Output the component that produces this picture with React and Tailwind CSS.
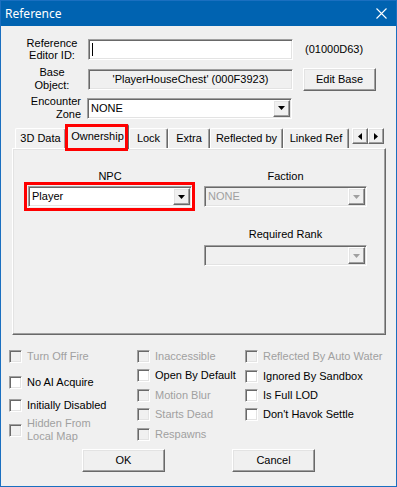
import React from 'react';

const sunken =
  'border border-t-[#a0a0a0] border-l-[#a0a0a0] border-b-white border-r-white shadow-[inset_1px_1px_0_#696969,inset_-1px_-1px_0_#e3e3e3]';
const raised =
  'border border-t-white border-l-white border-b-[#696969] border-r-[#696969] shadow-[inset_-1px_-1px_0_#a0a0a0,inset_1px_1px_0_#e3e3e3]';

const DownArrow = ({ disabled }) => (
  <svg width="7" height="4" viewBox="0 0 7 4">
    <path d="M0 0h7L3.5 4z" fill={disabled ? '#a0a0a0' : '#000'} />
  </svg>
);

const Combo = ({ value, disabled, className = '' }) => (
  <div className={`${sunken} h-[21px] flex p-[1px] ${disabled ? 'bg-[#f0f0f0]' : 'bg-white'} ${className}`}>
    <div className={`flex-1 flex items-center pl-[2px] ${disabled ? 'text-[#a0a0a0]' : 'text-black'}`}>{value}</div>
    <div className={`${raised} w-[17px] h-full bg-[#f0f0f0] flex items-center justify-center`}>
      <DownArrow disabled={disabled} />
    </div>
  </div>
);

const Check = ({ label, disabled, className = '' }) => (
  <div className={`flex items-center gap-[5px] ${className}`}>
    <div className={`${sunken} w-[13px] h-[13px] shrink-0 ${disabled ? 'bg-[#f0f0f0]' : 'bg-white'}`} />
    <div className={`leading-[13px] whitespace-pre ${disabled ? 'text-[#a0a0a0]' : 'text-black'}`}>{label}</div>
  </div>
);

const Tab = ({ label, width, selected }) => (
  <div
    className={`${width} flex items-center justify-center border-t border-l border-t-white border-l-white border-r border-r-[#696969] shadow-[inset_-1px_0_0_#a0a0a0] rounded-t-[2px] bg-[#f0f0f0] ${
      selected ? 'h-[25px] -mb-[1px] relative z-10 pb-[1px]' : 'h-[20px]'
    }`}
  >
    {label}
  </div>
);

export default function App() {
  return (
    <div className="w-[397px] h-[487px] bg-[#f0f0f0] border border-[#1a6fc0] flex flex-col font-['Liberation_Sans',Arial,sans-serif] text-[11px] text-black overflow-hidden">
      {/* title bar */}
      <div className="h-[25px] shrink-0 bg-[#0063b1] flex items-center justify-between text-white">
        <span className="ml-[4px] text-[12px] font-['Noto_Sans',sans-serif]">Reference</span>
        <svg width="11" height="11" viewBox="0 0 11 11" className="mr-[9px]">
          <path d="M0.5 0.5L10.5 10.5M10.5 0.5L0.5 10.5" stroke="#fff" strokeWidth="1.1" />
        </svg>
      </div>

      {/* Row 1 */}
      <div className="h-[24px] mt-[11px] flex items-center">
        <div className="ml-[21px] w-[60px] mr-[6px] text-center leading-[12px]">
          Reference
          <br />
          Editor ID:
        </div>
        <div className={`${sunken} w-[205px] h-[21px] bg-white flex items-center pl-[3px]`}>
          <div className="w-[1px] h-[13px] bg-black" />
        </div>
        <div className="ml-[12px]">(01000D63)</div>
      </div>

      {/* Row 2 */}
      <div className="h-[24px] mt-[6px] flex items-center">
        <div className="ml-[21px] w-[60px] mr-[6px] text-center leading-[13px]">
          Base
          <br />
          Object:
        </div>
        <div className={`${sunken} w-[205px] h-[21px] bg-[#f0f0f0] flex items-center justify-center`}>
          'PlayerHouseChest' (000F3923)
        </div>
        <div className={`${raised} ml-[10px] w-[73px] h-[23px] flex items-center justify-center`}>Edit Base</div>
      </div>

      {/* Row 3 */}
      <div className="h-[24px] mt-[5px] flex items-center">
        <div className="ml-[21px] w-[59px] mr-[6px] text-right leading-[13px]">
          Encounter
          <br />
          Zone
        </div>
        <Combo value="NONE" className="w-[205px]" />
      </div>

      {/* Tabs */}
      <div className="h-[24px] mt-[4px] flex items-end pl-[14px]">
        <Tab label="3D Data" width="w-[51px]" />
        <div className="relative z-10 flex items-end">
          <Tab label="Ownership" width="w-[63px]" selected />
          <div className="absolute -left-[1px] top-0 w-[63px] h-[27px] border-[3px] border-[#ff0000] z-20" />
        </div>
        <Tab label="Lock" width="w-[39px]" />
        <Tab label="Extra" width="w-[42px]" />
        <Tab label="Reflected by" width="w-[73px]" />
        <Tab label="Linked Ref" width="w-[66px]" />
        <div className="flex self-start mt-[4px] ml-[3px]">
          <div className={`${raised} w-[16px] h-[16px] flex items-center justify-center`}>
            <svg width="4" height="7" viewBox="0 0 4 7">
              <path d="M4 0v7L0 3.5z" fill="#000" />
            </svg>
          </div>
          <div className={`${raised} w-[16px] h-[16px] flex items-center justify-center`}>
            <svg width="4" height="7" viewBox="0 0 4 7">
              <path d="M0 0v7L4 3.5z" fill="#000" />
            </svg>
          </div>
        </div>
      </div>

      {/* Tab panel */}
      <div className="ml-[11px] w-[374px] h-[187px] shrink-0 border border-t-white border-l-white border-b-[#696969] border-r-[#696969] shadow-[inset_-1px_-1px_0_#a0a0a0,inset_1px_1px_0_#e3e3e3] flex pt-[21px]">
        <div className="ml-[15px] w-[164px] flex flex-col">
          <div className="h-[13px] leading-[13px] text-center">NPC</div>
          <div className="relative mt-[3px]">
            <Combo value="Player" className="w-[164px]" />
            <div className="absolute -left-[4px] -top-[4px] -right-[3px] -bottom-[4px] border-[3px] border-[#ff0000]" />
          </div>
        </div>
        <div className="ml-[12px] w-[163px] flex flex-col">
          <div className="h-[13px] leading-[13px] text-center">Faction</div>
          <Combo value="NONE" disabled className="w-[163px] mt-[3px]" />
          <div className="h-[13px] leading-[13px] text-center mt-[21px]">Required Rank</div>
          <Combo value="" disabled className="w-[163px] mt-[4px]" />
        </div>
      </div>

      {/* Checkboxes */}
      <div className="h-[93px] mt-[15px] flex shrink-0">
        <div className="ml-[8px] w-[128px] flex flex-col">
          <Check label="Turn Off Fire" disabled />
          <Check label="No AI Acquire" className="mt-[13px]" />
          <Check label="Initially Disabled" className="mt-[10px]" />
          <Check label={'Hidden From\nLocal Map'} disabled className="mt-[5px]" />
        </div>
        <div className="w-[108px] flex flex-col">
          <Check label="Inaccessible" disabled />
          <Check label="Open By Default" className="mt-[6px]" />
          <Check label="Motion Blur" disabled className="mt-[7px]" />
          <Check label="Starts Dead" disabled className="mt-[6px]" />
          <Check label="Respawns" disabled className="mt-[7px]" />
        </div>
        <div className="flex flex-col">
          <Check label="Reflected By Auto Water" disabled />
          <Check label="Ignored By Sandbox" className="mt-[7px]" />
          <Check label="Is Full LOD" className="mt-[6px]" />
          <Check label="Don't Havok Settle" className="mt-[6px]" />
        </div>
      </div>

      {/* Buttons */}
      <div className="mt-[6px] flex">
        <div className={`${raised} ml-[81px] w-[83px] h-[23px] flex items-center justify-center`}>OK</div>
        <div className={`${raised} ml-[67px] w-[83px] h-[23px] flex items-center justify-center`}>Cancel</div>
      </div>
    </div>
  );
}
